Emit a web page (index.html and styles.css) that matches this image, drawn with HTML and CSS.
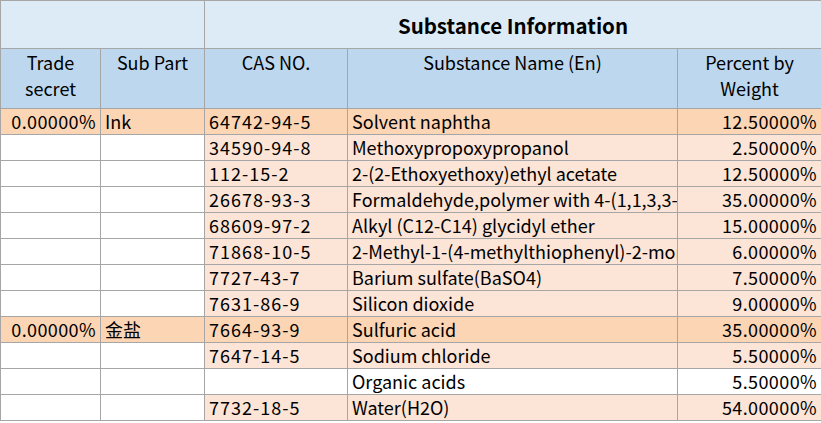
FILE: index.html
```html
<!DOCTYPE html>
<html>
<head>
<meta charset="utf-8">
<link rel="stylesheet" href="styles.css">
</head>
<body>
<table class="sheet">
  <colgroup>
    <col class="c-trade"><col class="c-sub"><col class="c-cas"><col class="c-name"><col class="c-pct">
  </colgroup>
  <thead>
    <tr class="h1">
      <th colspan="2"></th>
      <th colspan="3" class="title">Substance Information</th>
    </tr>
    <tr class="h2">
      <th>Trade<br>secret</th>
      <th>Sub Part</th>
      <th>CAS NO.</th>
      <th>Substance Name (En)</th>
      <th>Percent by<br>Weight</th>
    </tr>
  </thead>
  <tbody>
    <tr class="part">
      <td class="num">0.00000%</td><td>Ink</td><td class="cas">64742-94-5</td><td class="name">Solvent naphtha</td><td class="num">12.50000%</td>
    </tr>
    <tr class="sub">
      <td></td><td></td><td class="cas">34590-94-8</td><td class="name">Methoxypropoxypropanol</td><td class="num">2.50000%</td>
    </tr>
    <tr class="sub">
      <td></td><td></td><td class="cas">112-15-2</td><td class="name">2-(2-Ethoxyethoxy)ethyl acetate</td><td class="num">12.50000%</td>
    </tr>
    <tr class="sub">
      <td></td><td></td><td class="cas">26678-93-3</td><td class="name">Formaldehyde,polymer with 4-(1,1,3,3-tetramethylbutyl)phenol</td><td class="num">35.00000%</td>
    </tr>
    <tr class="sub">
      <td></td><td></td><td class="cas">68609-97-2</td><td class="name">Alkyl (C12-C14) glycidyl ether</td><td class="num">15.00000%</td>
    </tr>
    <tr class="sub">
      <td></td><td></td><td class="cas">71868-10-5</td><td class="name">2-Methyl-1-(4-methylthiophenyl)-2-morpholinopropan-1-one</td><td class="num">6.00000%</td>
    </tr>
    <tr class="sub">
      <td></td><td></td><td class="cas">7727-43-7</td><td class="name">Barium sulfate(BaSO4)</td><td class="num">7.50000%</td>
    </tr>
    <tr class="sub">
      <td></td><td></td><td class="cas">7631-86-9</td><td class="name">Silicon dioxide</td><td class="num">9.00000%</td>
    </tr>
    <tr class="part">
      <td class="num">0.00000%</td><td>金盐</td><td class="cas">7664-93-9</td><td class="name">Sulfuric acid</td><td class="num">35.00000%</td>
    </tr>
    <tr class="sub">
      <td></td><td></td><td class="cas">7647-14-5</td><td class="name">Sodium chloride</td><td class="num">5.50000%</td>
    </tr>
    <tr class="sub blank">
      <td></td><td></td><td></td><td class="name">Organic acids</td><td class="num">5.50000%</td>
    </tr>
    <tr class="sub">
      <td></td><td></td><td class="cas">7732-18-5</td><td class="name">Water(H2O)</td><td class="num">54.00000%</td>
    </tr>
  </tbody>
</table>
</body>
</html>
```
FILE: styles.css
```css
html, body {
  margin: 0;
  padding: 0;
  background: #ffffff;
}

.sheet {
  border-collapse: collapse;
  table-layout: fixed;
  width: 821px;
  font-family: "Noto Sans CJK SC", "Noto Sans", sans-serif;
  font-size: 18px;
  color: #000;
}

.c-trade { width: 100px; }
.c-sub { width: 104px; }
.c-cas { width: 143px; }
.c-name { width: 330px; }
.c-pct { width: 144px; }

.sheet th,
.sheet td {
  border: 1px solid #a6a6a6;
  padding: 0 4px;
  white-space: nowrap;
  overflow: hidden;
}

.sheet th {
  line-height: 26px;
}

.h1 th {
  height: 47px;
  background: #ddebf7;
}

.title {
  font-size: 20.5px;
  font-weight: bold;
  text-align: center;
}

.h2 th {
  height: 59px;
  background: #bdd7ee;
  font-weight: normal;
  vertical-align: top;
  text-align: center;
  white-space: normal;
}

.sheet tbody tr {
  height: 25px;
}

.sheet td {
  height: 25px;
  line-height: 25px;
  padding-top: 0;
  padding-bottom: 0;
  text-align: left;
  text-overflow: clip;
}

.sheet td.num {
  text-align: right;
  letter-spacing: 0.4px;
}

.sheet td.cas {
  letter-spacing: 1px;
}

.part td {
  background: #fcd5b4;
}

.sub td {
  background: #ffffff;
}

.sub td:nth-child(n+3) {
  background: #fce4d6;
}

.blank td:nth-child(n+3) {
  background: #ffffff;
}
```
